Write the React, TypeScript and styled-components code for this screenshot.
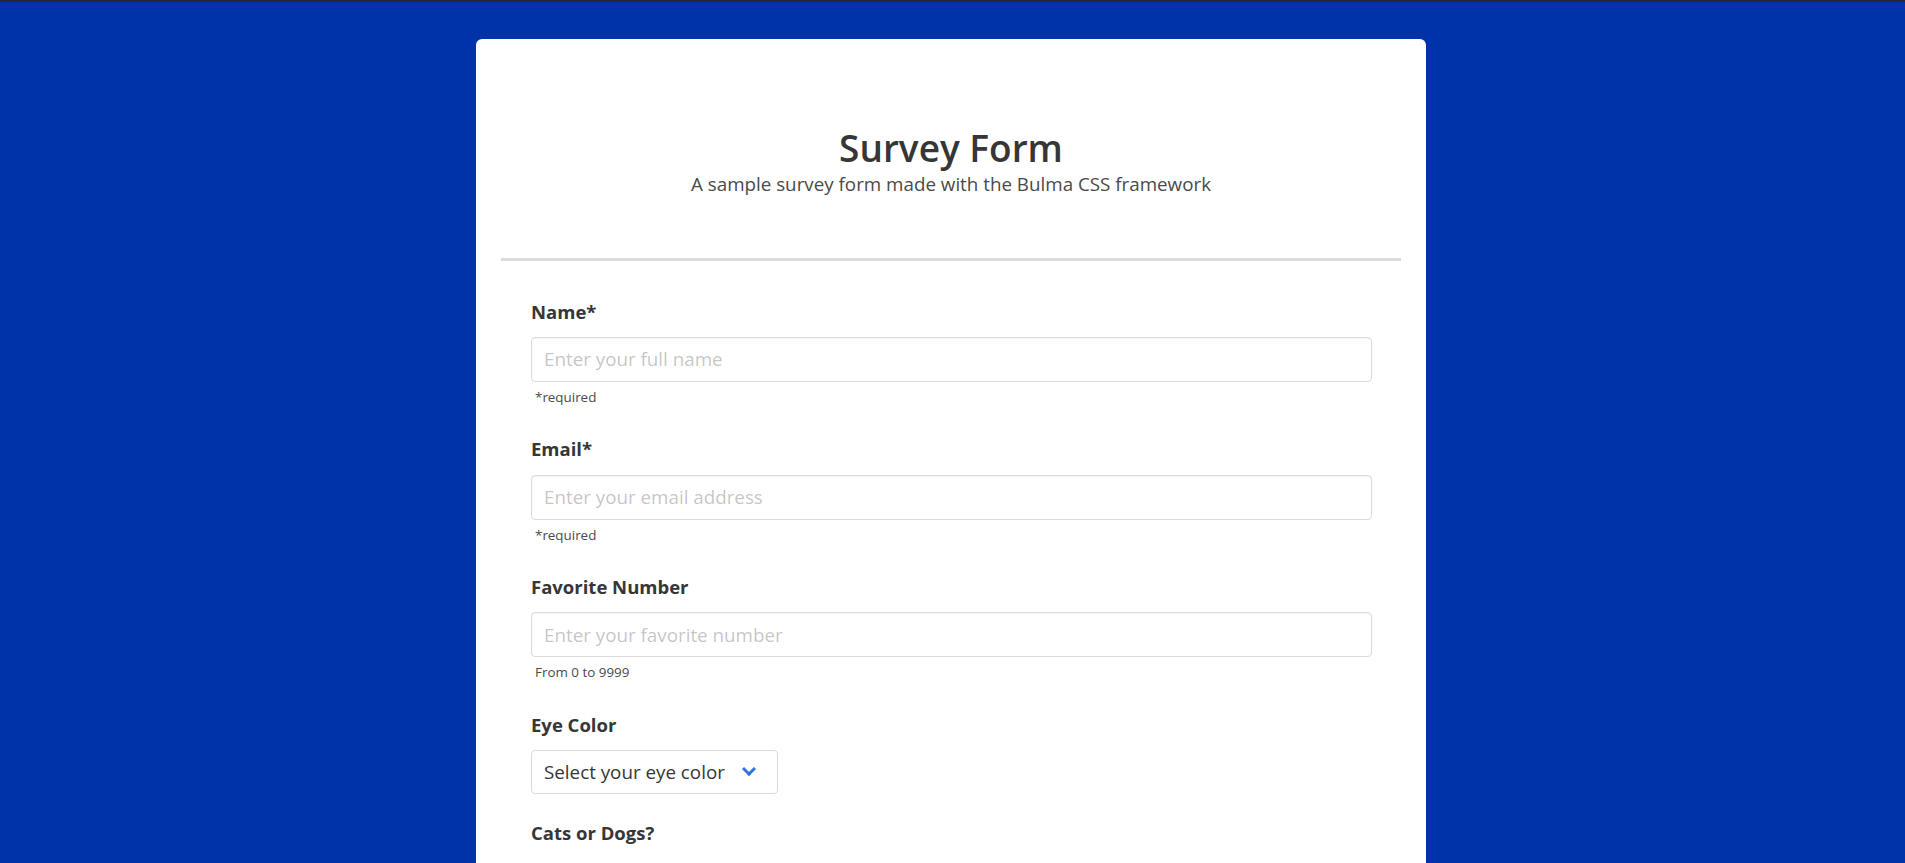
import React from "react";
import styled, { createGlobalStyle } from "styled-components";

// Styles

const GlobalStyle = createGlobalStyle`
  *, *::before, *::after {
    box-sizing: border-box;
  }

  html {
    border-top: 2px solid #26282e;
    background: #0033aa;
  }

  body {
    margin: 0;
    background: #0033aa;
    font-family: "Open Sans", "Noto Sans", sans-serif;
    color: #4a4a4a;
  }
`;

const Page = styled.main`
  display: flex;
  justify-content: center;
  padding: 37px 3px 0 0;
  min-height: 100vh;
`;

const Card = styled.section`
  width: 950px;
  min-height: 1400px;
  background: #fff;
  border-radius: 6px 6px 0 0;
  padding: 0 25px 60px;
`;

const Header = styled.header`
  padding-top: 88px;
  text-align: center;
`;

const Title = styled.h1`
  margin: 0;
  font-size: 37px;
  font-weight: 600;
  line-height: 1.125;
  color: #363636;
`;

const Subtitle = styled.p`
  margin: 4px 0 0;
  font-size: 18.8px;
  line-height: 1.22;
  color: #4a4a4a;
`;

const Divider = styled.hr`
  margin: 62px 0 0;
  border: none;
  height: 3px;
  background: #dbdbdb;
`;

const Form = styled.form`
  padding: 37px 29px 0 30px;
`;

const Field = styled.div<{ $space?: number }>`
  margin-bottom: ${(p) => p.$space ?? 27.5}px;
`;

const Label = styled.label`
  display: block;
  margin-bottom: 10.75px;
  font-size: 18.5px;
  font-weight: 700;
  line-height: 28.5px;
  color: #363636;
`;

const Input = styled.input`
  display: block;
  width: 100%;
  height: 45px;
  padding: 0 12px;
  border: 1px solid #dbdbdb;
  border-radius: 4px;
  box-shadow: inset 0 1px 2px rgba(10, 10, 10, 0.05);
  font-family: inherit;
  font-size: 18.8px;
  color: #363636;
  background: #fff;
  outline: none;

  &::placeholder {
    color: rgba(54, 54, 54, 0.3);
  }
`;

const Help = styled.p`
  margin: 5px 0 0;
  padding-left: 4px;
  font-size: 13.4px;
  line-height: 21px;
  color: #4a4a4a;
`;

const SelectWrap = styled.div`
  position: relative;
  display: inline-block;
  width: 247px;

  &::after {
    content: "";
    position: absolute;
    right: 24px;
    top: 14px;
    width: 10px;
    height: 10px;
    border: 3px solid #3273dc;
    border-top: 0;
    border-right: 0;
    transform: rotate(-45deg);
    pointer-events: none;
  }
`;

const Select = styled.select`
  display: block;
  width: 100%;
  height: 44px;
  padding: 0 40px 0 12px;
  border: 1px solid #dbdbdb;
  border-radius: 4px;
  font-family: inherit;
  font-size: 18.8px;
  color: #363636;
  background: #fff;
  appearance: none;
  outline: none;
`;

const Options = styled.div`
  display: flex;
  flex-direction: column;
  gap: 8px;
  font-size: 18.8px;
  color: #363636;
`;

const Choice = styled.label`
  display: flex;
  align-items: center;
  gap: 8px;
`;

const TextArea = styled.textarea`
  display: block;
  width: 100%;
  min-height: 120px;
  padding: 10px 12px;
  border: 1px solid #dbdbdb;
  border-radius: 4px;
  font-family: inherit;
  font-size: 18.8px;
  resize: vertical;

  &::placeholder {
    color: rgba(54, 54, 54, 0.3);
  }
`;

const Submit = styled.button`
  height: 44px;
  padding: 0 20px;
  border: none;
  border-radius: 4px;
  background: #3273dc;
  color: #fff;
  font-family: inherit;
  font-size: 18.8px;
`;

// ================================

interface TextFieldProps {
  label: string;
  placeholder: string;
  type: string;
  help: string;
}

const fields: TextFieldProps[] = [
  { label: "Name*", placeholder: "Enter your full name", type: "text", help: "*required" },
  { label: "Email*", placeholder: "Enter your email address", type: "email", help: "*required" },
  { label: "Favorite Number", placeholder: "Enter your favorite number", type: "number", help: "From 0 to 9999" },
];

const App: React.FC = (): JSX.Element => {
  return (
    <>
      <GlobalStyle />
      <Page>
        <Card>
          <Header>
            <Title>Survey Form</Title>
            <Subtitle>A sample survey form made with the Bulma CSS framework</Subtitle>
          </Header>
          <Divider />
          <Form onSubmit={(e) => e.preventDefault()}>
            {fields.map((field) => (
              <Field key={field.label}>
                <Label>{field.label}</Label>
                <Input type={field.type} placeholder={field.placeholder} />
                <Help>{field.help}</Help>
              </Field>
            ))}
            <Field $space={25}>
              <Label>Eye Color</Label>
              <SelectWrap>
                <Select defaultValue="">
                  <option value="" disabled>
                    Select your eye color
                  </option>
                  <option>Brown</option>
                  <option>Blue</option>
                  <option>Green</option>
                  <option>Hazel</option>
                </Select>
              </SelectWrap>
            </Field>
            <Field>
              <Label>Cats or Dogs?</Label>
              <Options>
                <Choice>
                  <input type="radio" name="pet" /> Cats
                </Choice>
                <Choice>
                  <input type="radio" name="pet" /> Dogs
                </Choice>
              </Options>
            </Field>
            <Field>
              <Label>Comments</Label>
              <TextArea placeholder="Any other comments?" />
            </Field>
            <Submit type="submit">Submit</Submit>
          </Form>
        </Card>
      </Page>
    </>
  );
};

export default App;
